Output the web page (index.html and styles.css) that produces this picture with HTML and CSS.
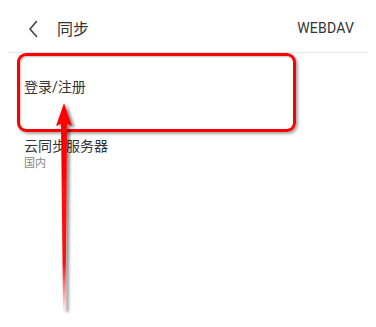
FILE: index.html
```html
<!DOCTYPE html>
<html lang="zh">
<head>
<meta charset="utf-8">
<link rel="stylesheet" href="styles.css">
</head>
<body>
<div class="page">
  <header class="bar">
    <div class="bar-left">
      <svg class="back" width="12" height="18" viewBox="0 0 12 18"><polyline points="9.5,1.5 3,9 9.5,16.5" fill="none" stroke="#444" stroke-width="1.6" stroke-linecap="round" stroke-linejoin="round"/></svg>
      <span class="title">同步</span>
    </div>
    <span class="action">WEBDAV</span>
  </header>
  <div class="item item-login">登录/注册</div>
  <div class="item item-server">
    <div class="item-title">云同步服务器</div>
    <div class="item-sub">国内</div>
  </div>
</div>
<div class="mark-box"></div>
<svg class="mark-arrow" width="40" height="220" viewBox="0 0 40 220">
  <defs>
    <linearGradient id="shaft" x1="0" y1="0" x2="0" y2="1">
      <stop offset="0" stop-color="#ff0000"/>
      <stop offset="0.75" stop-color="#ff1010"/>
      <stop offset="1" stop-color="#ffe8e8"/>
    </linearGradient>
    <filter id="sh" x="-50%" y="-10%" width="200%" height="120%">
      <feDropShadow dx="3" dy="2" stdDeviation="1.6" flood-color="#000" flood-opacity="0.45"/>
    </filter>
  </defs>
  <g filter="url(#sh)">
    <polygon points="14,3 6,26 11,24 17,24 22,26" fill="#ff0000"/>
    <polygon points="11,24 17,24 15.5,210 13,210" fill="url(#shaft)"/>
  </g>
</svg>
</body>
</html>
```
FILE: styles.css
```css
html, body {
  margin: 0;
  padding: 0;
  background: #fff;
}
body {
  font-family: Roboto, "Noto Sans CJK SC", sans-serif;
  color: #333;
  position: relative;
  width: 376px;
  height: 327px;
  overflow: hidden;
}
.page {
  margin: 0 8px;
}
.bar {
  height: 53px;
  border-bottom: 1px solid #e6e6e6;
  display: flex;
  align-items: center;
  justify-content: space-between;
  box-sizing: border-box;
  padding: 4px 14px 0 19px;
}
.bar-left {
  display: flex;
  align-items: center;
  gap: 18px;
}
.back {
  display: block;
  margin-top: 1px;
}
.title {
  font-size: 16px;
  color: #333;
}
.action {
  font-size: 14px;
  color: #333;
  letter-spacing: 0.2px;
}
.item {
  padding: 0 16px;
  font-size: 14px;
  color: #333;
}
.item-login {
  height: 64px;
  display: flex;
  align-items: center;
  margin-top: 1px;
}
.item-server {
  padding-top: 18px;
}
.item-title {
  line-height: 20px;
}
.item-sub {
  font-size: 11px;
  line-height: 15px;
  color: #888;
}
.mark-box {
  position: absolute;
  left: 17px;
  top: 53px;
  width: 279px;
  height: 79px;
  box-sizing: border-box;
  border: 3px solid #ff0000;
  border-radius: 9px;
  box-shadow: 2px 2px 3px rgba(0,0,0,0.35), inset 1px 1px 2px rgba(0,0,0,0.25);
}
.mark-arrow {
  position: absolute;
  left: 50px;
  top: 100px;
}
```
